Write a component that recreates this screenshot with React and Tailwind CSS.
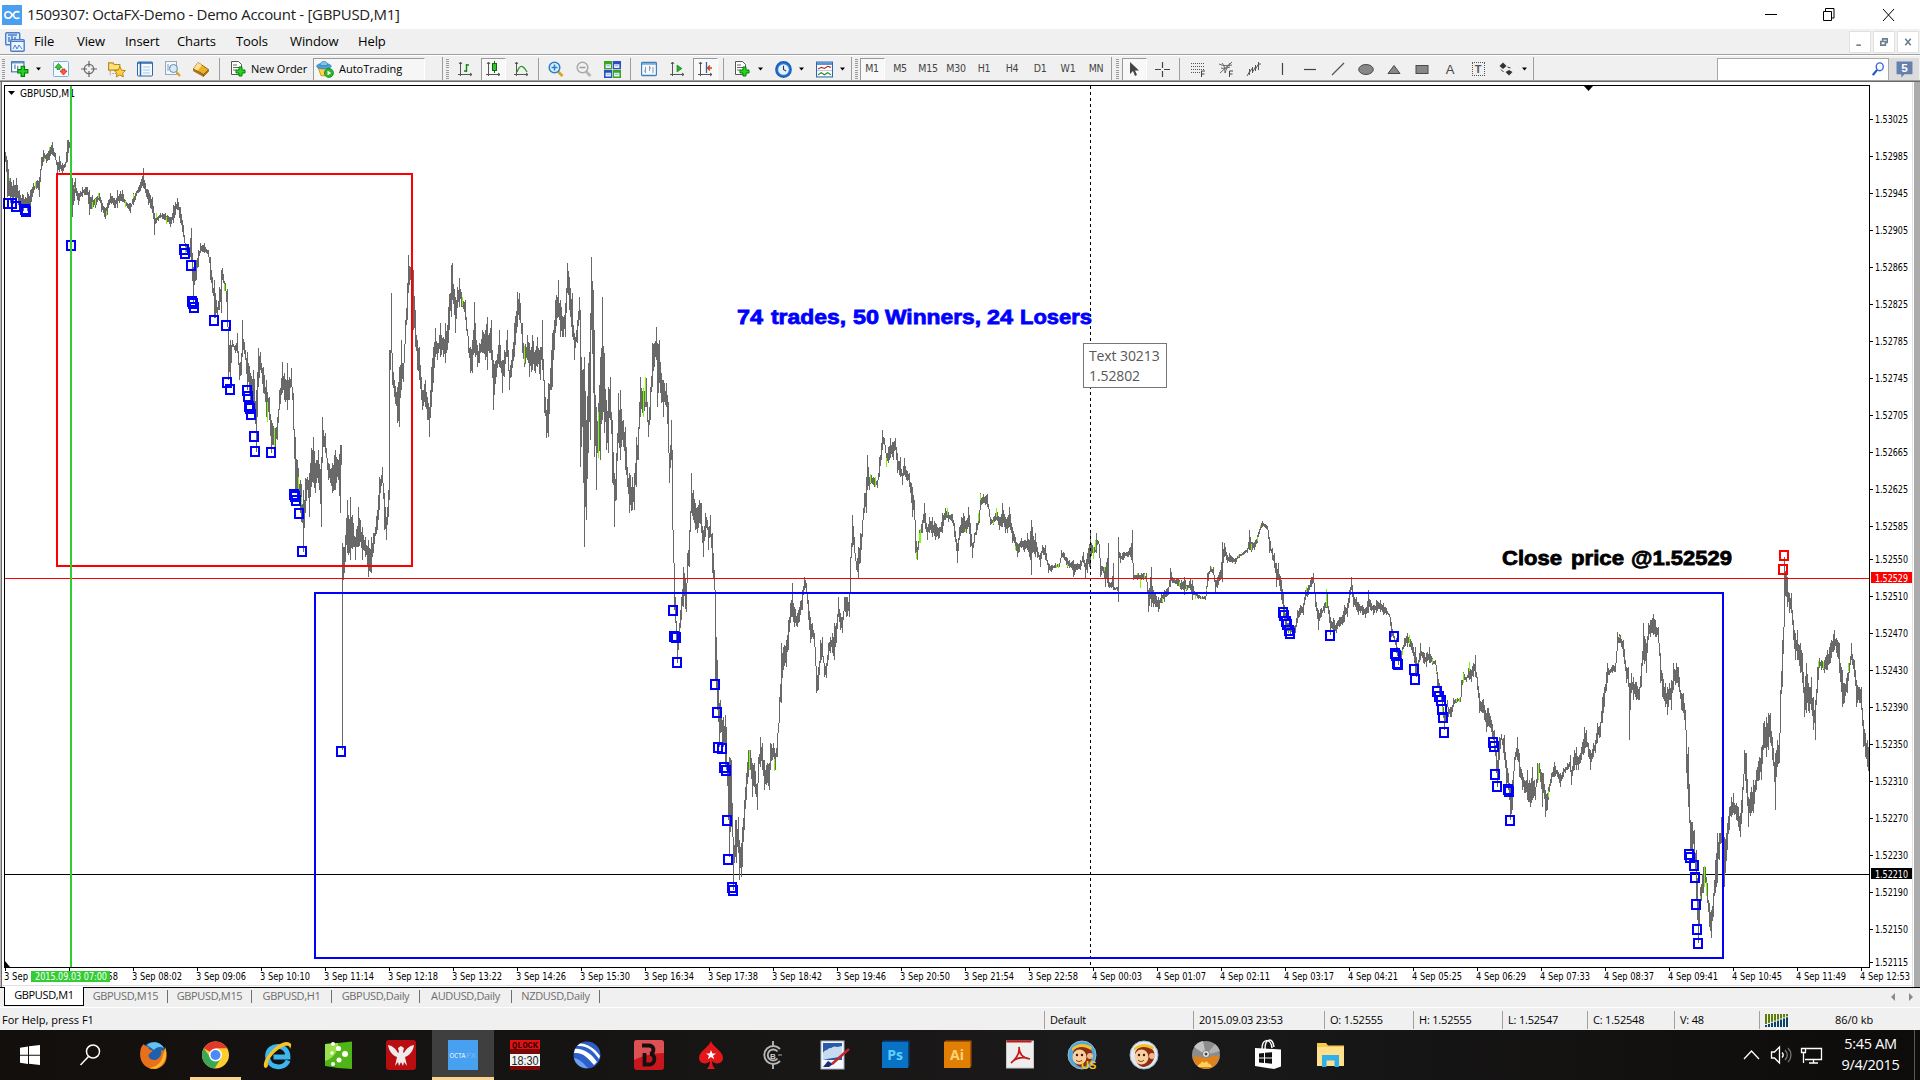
import clsx from 'clsx';

const UI = "font-['Open_Sans','Noto_Sans',sans-serif]";
const SMALL = "font-['DejaVu_Sans_Condensed','DejaVu_Sans',sans-serif]";

/* ---------- chart data ---------- */

// Every segment has its own origin; values are x, high, low in thirds of a pixel.
const SEGMENTS = [
  {
    ox: 0,
    oy: 80,
    range: [
      15,215,245, 21,240,350, 30,295,370, 40,300,372, 48,295,360, 57,330,385, 70,345,392, 80,335,392, 90,330,385, 100,310,340,
      110,300,325, 118,290,350, 123,230,270, 128,210,245, 138,222,248, 148,200,240, 157,187,225, 165,220,240, 170,245,280,
      178,228,275, 186,248,280, 194,245,262, 200,180,245, 205,180,220, 211,170,215, 217,320,410, 226,295,340, 233,340,375,
      245,320,350, 262,320,345, 266,330,405, 275,345,385, 285,355,385, 296,340,362, 303,360,395, 314,385,418, 322,370,405,
      330,340,370, 342,355,385, 352,330,385, 365,330,365, 376,360,380, 390,370,400, 400,340,375, 415,322,340, 428,265,325,
      435,310,340, 445,330,375, 455,350,400, 462,400,465, 467,405,430, 480,400,415, 495,400,420, 510,410,440, 520,375,430,
      530,355,390, 540,380,430, 550,435,470, 556,490,520, 568,500,520, 573,445,545, 578,560,670, 587,540,600, 593,510,560,
      600,490,520, 612,490,520, 625,510,530, 630,530,600, 636,590,640, 643,600,715, 650,680,720, 656,620,690, 662,570,700,
      667,565,600, 674,610,632, 680,628,740, 684,740,900, 691,780,925, 697,780,800, 705,795,820, 712,760,820, 716,850,900,
      722,820,885, 727,720,830, 735,810,840, 742,815,930, 750,880,960, 760,870,980, 767,930,1115, 773,805,920, 780,815,870,
      790,860,940, 797,900,1010, 806,950,1020, 814,1020,1120, 824,1045,1100, 830,1010,1080, 838,930,990, 845,845,940,
      852,880,960, 860,850,990, 866,890,960, 873,865,920, 878,940,1050, 884,1070,1240, 892,1140,1230, 900,1200,1300,
      908,1230,1415, 914,1195,1300, 920,1190,1230, 926,1180,1310, 932,1105,1220, 938,1070,1210, 946,1150,1240, 954,1110,1210,
      962,1130,1340, 966,1010,1150, 975,1060,1120, 985,1150,1200, 995,1150,1240, 1005,1110,1230, 1015,1140,1200,
      1021,1095,1300, 1025,1390,2010, 1030,1400,1500, 1040,1260,1420, 1050,1250,1440, 1058,1330,1400, 1066,1370,1440,
      1075,1280,1400, 1085,1340,1440, 1095,1370,1430, 1105,1380,1490, 1113,1370,1480, 1120,1360,1420, 1130,1290,1350,
      1138,1190,1290, 1146,1160,1210, 1152,1240,1350, 1158,1310,1380, 1165,1230,1310, 1168,810,1260, 1172,640,820,
      1176,825,915, 1182,900,950, 1190,920,1030, 1196,860,1040, 1202,780,930, 1208,850,905, 1214,720,790, 1220,610,720,
      1224,525,640, 1230,560,600, 1236,575,650,
    ],
    up: [
      28,295,303, 106,305,325, 133,233,243, 149,200,210, 224,320,327, 277,365,388, 286,358,375, 295,340,355, 319,393,408,
      375,362,380, 400,342,355, 470,400,415, 499,410,433, 556,500,520, 674,613,632, 802,965,1027, 824,1043,1100,
      895,1190,1240, 905,1250,1275, 1387,650,677,
    ],
  },
  {
    ox: 400,
    oy: 220,
    range: [
      40,150,330, 46,270,380, 52,360,450, 58,380,480, 66,510,570, 74,480,560, 82,530,600, 86,560,650, 92,440,560, 98,380,490,
      104,325,410, 112,370,420, 121,310,410, 128,350,410, 136,310,430, 144,260,370, 152,135,290, 157,130,240, 165,230,340,
      172,200,265, 178,175,260, 186,230,260, 196,240,300, 204,350,400, 210,380,460, 216,360,460, 222,245,400, 230,375,440,
      238,370,430, 246,330,400, 254,330,420, 260,290,450, 268,340,400, 274,300,420, 280,420,570, 288,420,470, 296,330,440,
      305,420,520, 312,390,470, 320,330,410, 327,450,510, 334,420,470, 342,310,410, 350,215,320, 358,220,300, 366,310,400,
      372,380,440, 380,345,420, 388,370,470, 396,345,450, 404,390,460, 412,350,440, 420,380,480, 426,300,450, 432,480,580,
      438,570,655, 444,490,650, 452,390,510, 457,340,500, 465,240,340, 473,180,290, 480,240,350, 488,290,350, 494,250,350,
      500,130,220, 508,170,270, 516,220,350, 523,340,420, 530,300,370, 537,230,300, 541,270,740, 547,450,620, 553,410,980,
      558,600,900, 563,430,700, 569,280,660, 573,110,330, 578,210,520, 583,330,710, 588,560,810, 594,550,710, 600,410,720,
      607,230,600, 612,400,640, 618,540,690, 624,500,700, 630,470,600, 636,600,790, 643,760,920, 648,700,840, 655,520,670,
      661,510,720, 668,600,680, 674,620,750, 680,740,800, 687,760,880, 695,770,870, 703,760,870, 709,650,800, 715,620,720,
      721,470,590, 728,530,590, 737,475,560, 744,600,650, 750,500,600, 756,370,500, 762,370,440, 767,320,420, 772,370,560,
      777,360,490, 784,460,550, 790,480,590, 797,490,560, 803,545,700, 807,700,790, 812,600,720, 815,690,930, 819,930,1030,
      822,1040,1170, 826,1120,1240,
    ],
    up: [373,378,430, 596,577,713, 731,503,590, 737,472,545],
  },
  {
    ox: 640,
    oy: 420,
    range: [
      106,530,610, 112,650,730, 118,610,660, 124,530,600, 130,440,560, 137,490,575, 142,400,480, 148,330,440, 152,160,280,
      158,210,300, 164,250,330, 170,260,340, 176,240,310, 182,250,340, 188,330,410, 194,280,350, 200,300,330, 205,320,390,
      211,285,350, 217,340,460, 221,450,510, 226,520,780, 232,720,870, 236,850,980, 241,840,940, 246,900,970, 250,890,980,
      254,885,1040, 259,920,1050, 263,1050,1200, 267,1010,1310, 272,1020,1220, 276,1150,1250, 279,1260,1410, 284,1200,1310,
      289,1200,1330, 293,1190,1300, 297,1260,1380, 302,1270,1370, 306,1220,1340, 312,1140,1230, 318,1060,1140, 325,990,1070,
      331,990,1050, 337,1030,1130, 343,1030,1100, 350,1090,1170, 354,1010,1070, 359,950,1040, 366,970,1050, 373,1020,1110,
      380,1030,1090, 386,1030,1110, 391,970,1050, 398,970,1010, 405,1000,1050, 411,940,1010, 417,830,910, 424,670,850,
      430,680,750, 437,660,740, 445,600,690, 451,550,610, 455,490,590, 462,560,620, 470,580,620, 478,560,605, 486,510,570,
      492,472,510, 497,490,520, 504,540,600, 511,590,670, 517,610,650, 523,640,680, 528,740,820, 534,740,810, 540,660,730,
      546,650,710, 551,740,770, 557,730,775, 563,670,720, 570,650,700, 577,640,700, 582,610,720, 588,610,670, 594,530,590,
      600,580,630, 606,590,640, 612,530,570, 619,530,590, 626,520,590, 631,410,500, 636,285,380, 642,350,400, 648,430,450,
      653,380,475, 659,340,430, 665,300,350, 671,220,280, 677,170,280, 681,105,210, 687,170,210, 694,165,190, 702,175,200,
      711,180,205, 717,110,170, 723,70,120, 727,30,90, 731,55,75, 737,100,135, 744,80,130, 751,55,115, 758,65,120, 766,55,90,
      772,100,160, 779,110,170, 785,160,195, 792,115,165, 799,150,180, 808,160,200, 815,200,290, 821,240,300, 826,340,400,
      832,380,420, 838,330,370, 846,300,340, 853,250,310, 860,320,360, 868,290,340, 876,290,350, 886,310,360, 896,320,355,
      906,280,340, 916,265,300, 925,275,305, 935,282,310, 943,310,350, 950,370,430, 956,320,360, 962,290,340, 969,280,340,
      977,300,340, 984,260,320, 990,310,380, 995,370,415, 1001,340,370, 1008,310,345, 1016,270,310, 1020,220,260,
      1030,222,250, 1042,222,260, 1050,290,315, 1060,290,315, 1068,270,300, 1078,290,330, 1086,250,320, 1094,290,340,
      1101,290,340, 1108,260,320, 1116,320,370, 1124,350,390, 1132,370,410, 1142,355,385, 1152,360,395, 1160,340,390,
      1168,360,410, 1173,300,465, 1177,320,400, 1184,340,410, 1192,380,415, 1199,400,440, 1206,375,400, 1216,375,420,
      1224,430,460, 1234,435,455, 1245,430,445, 1257,430,440, 1264,390,415, 1272,400,420, 1282,415,445, 1292,425,445,
      1300,420,470, 1312,430,450, 1320,420,450, 1328,395,430, 1336,430,475, 1342,400,460, 1349,340,440, 1356,375,400,
      1362,380,400, 1368,340,400, 1375,362,372, 1379,420,470, 1388,440,460, 1396,440,500, 1403,370,500, 1406,485,505,
      1412,485,505, 1420,430,510, 1423,500,510, 1430,500,512, 1433,350,545, 1436,395,415, 1440,400,430, 1450,395,420,
      1460,395,410, 1470,380,410, 1477,330,430, 1480,465,480, 1492,460,480,
    ],
    up: [
      328,990,1050, 404,1017,1052, 691,162,190, 706,170,202, 739,115,140, 829,395,418, 841,328,370, 838,340,370, 922,265,285,
      977,328,335, 1015,280,302, 1021,222,240, 1060,303,313, 1069,265,290, 1127,378,390, 1248,436,444, 1255,432,444,
      1283,432,442, 1360,380,418, 1366,360,390, 1394,440,452, 1492,460,466,
    ],
  },
  {
    ox: 1100,
    oy: 500,
    range: [
      112,220,240, 122,220,240, 130,220,240, 138,220,245, 145,270,335, 152,200,320, 158,270,320, 165,280,320, 175,290,335,
      183,280,310, 192,270,305, 203,260,285, 211,205,260, 220,235,250, 232,235,258, 243,240,270, 252,230,285, 262,255,270,
      269,235,270, 276,240,300, 284,275,290, 295,285,297, 305,288,297, 316,287,300, 322,220,260, 330,198,215, 340,200,225,
      346,240,280, 352,230,265, 360,210,240, 367,125,245, 373,130,170, 380,165,190, 388,160,185, 397,170,190, 405,175,192,
      415,165,175, 428,155,165, 440,145,160, 446,90,150, 453,125,155, 462,125,150, 472,105,130, 480,75,90, 486,62,80,
      500,78,90, 508,110,160, 516,145,180, 523,160,205, 529,190,260, 535,190,240, 543,240,300, 549,280,350, 556,340,380,
      565,370,400, 575,380,405, 585,375,400, 591,330,370, 600,315,345, 608,310,345, 616,270,300, 625,255,285, 632,230,260,
      640,220,250, 646,290,320, 655,330,390, 663,325,350, 672,310,340, 680,275,325, 686,330,370, 691,350,405, 698,355,395,
      707,370,400, 716,350,380, 725,345,375, 733,315,365, 741,310,350, 747,270,310, 754,230,270, 760,280,320, 767,290,330,
      775,305,345, 785,315,345, 795,325,355, 803,270,340, 811,300,330, 819,315,345, 829,300,340, 839,300,335, 848,310,345,
      858,325,345, 866,342,350, 872,365,410, 880,400,415, 887,415,460, 893,450,495, 900,455,490, 906,440,465, 912,415,440,
      920,400,440, 928,410,440, 936,430,460, 944,440,520, 949,470,530, 955,480,510, 961,430,480, 970,455,490, 978,460,500,
      987,440,490, 996,475,495, 1005,480,495, 1011,515,560, 1017,550,590, 1024,580,600, 1032,640,690, 1040,600,620,
      1045,620,650, 1052,620,650, 1060,595,620, 1070,595,607, 1079,590,605, 1083,540,580, 1089,515,545, 1098,530,545,
      1106,490,540, 1113,510,545, 1124,465,530, 1131,530,570, 1138,580,640, 1146,600,640, 1153,615,660, 1160,625,680,
      1168,640,680, 1176,675,710, 1182,690,750, 1187,750,820, 1192,780,860, 1197,710,780, 1204,703,720, 1212,705,780,
      1217,780,860, 1224,820,870, 1231,860,960, 1237,840,930, 1243,770,800, 1250,710,780, 1257,760,830, 1265,820,870,
      1273,840,880, 1281,810,900, 1290,850,920, 1297,800,900, 1305,860,900, 1310,790,850, 1316,790,840,
    ],
    up: [
      14,203,212, 122,235,265, 133,222,235, 188,293,307, 238,245,260, 260,258,270, 286,285,297, 305,290,297, 320,267,272,
      334,200,207, 404,188,193, 415,166,170, 425,156,160, 454,133,150, 473,110,122, 480,75,80, 620,262,275, 680,268,320,
      906,450,465, 928,405,432, 998,478,490, 1010,514,520, 1028,620,636, 1068,597,605, 1078,594,605, 1090,520,548,
      1108,485,512, 1316,793,838,
    ],
  },
  {
    ox: 1480,
    oy: 540,
    range: [
      -4,480,515, 4,490,515, 10,478,505, 17,520,575, 24,505,545, 32,540,575, 40,560,600,
    ],
    up: [],
  },
  {
    ox: 1480,
    oy: 540,
    range: [
      178,670,700, 185,700,800, 190,700,760, 194,750,830, 200,760,810, 205,740,780, 212,700,730, 218,680,710, 223,665,710,
      232,690,710, 240,700,740, 250,685,710, 262,670,690, 269,645,695, 274,690,735, 281,630,690, 287,620,690, 295,650,690,
      303,620,660, 311,560,640, 318,570,620, 325,610,650, 331,630,690, 338,610,650, 345,600,640, 352,550,610, 360,545,590,
      366,470,550, 373,440,500, 381,370,430, 388,390,405, 397,375,400, 406,370,395, 412,275,320, 420,285,310, 428,300,350,
      437,380,430, 443,380,440, 447,430,600, 453,400,460, 460,410,480, 468,425,480, 476,440,480, 483,370,440, 490,250,360,
      497,310,400, 503,250,300, 510,240,290, 518,222,285, 525,240,290, 533,260,310, 540,340,430, 547,400,470, 554,430,500,
      560,440,525, 568,430,480, 574,420,510, 580,370,450, 587,370,430, 595,380,440, 602,460,510, 608,460,520, 614,510,570,
      619,590,700, 624,620,800, 629,840,930, 635,845,930, 641,870,940, 648,930,1080, 655,1080,1210, 661,1040,1100,
      668,980,1060, 674,980,1030, 681,1030,1090, 686,1090,1160, 693,1110,1195, 699,1060,1130, 705,960,1060, 710,880,1030,
      716,880,960, 722,830,910, 728,830,890, 733,910,1040, 740,850,930, 746,800,870, 752,770,830, 760,760,820, 768,790,840,
      774,800,860, 779,820,890, 785,740,820, 792,630,700, 797,640,760, 805,770,860, 812,740,820, 820,720,820, 828,690,750,
      836,650,720, 843,620,720, 850,550,630, 857,530,650, 864,520,630, 871,520,610, 877,590,660, 884,640,810, 890,600,680,
      897,580,670, 901,450,560, 906,300,440, 911,150,360, 913,50,170, 917,100,170, 920,110,200, 927,160,220, 933,160,220,
      939,240,300, 945,280,360, 952,270,360, 960,310,400, 967,340,430, 972,440,530, 979,370,520, 986,440,520, 993,410,510,
      1000,470,570, 1005,480,600, 1010,380,460, 1017,355,385, 1024,360,390, 1032,360,400, 1040,330,390, 1050,310,370,
      1061,270,330, 1070,300,350, 1078,310,400, 1087,390,500, 1093,430,490, 1100,400,460, 1107,370,400, 1114,310,360,
      1121,360,410, 1128,420,500, 1135,440,480, 1143,440,510, 1149,540,620, 1156,580,650, 1161,600,680, 1166,600,740,
    ],
    up: [
      176,680,720, 205,752,772, 418,287,293, 661,1068,1078, 673,978,1040, 680,1027,1067, 1015,363,380, 1031,367,388,
      1105,370,392,
    ],
  },
];

const MARKERS = [
  [8,203], [12,203], [16,206], [25,209], [26,211], [71,245], [184,249], [185,253], [191,265], [192,301], [193,303], [194,307],
  [214,320], [226,325], [227,382], [230,389], [247,390], [248,396], [249,406], [250,408], [251,414], [254,436], [255,451],
  [271,452], [294,494], [295,496], [296,500], [299,513], [302,551], [341,751], [673,610], [674,636], [676,637], [677,662],
  [715,684], [717,712], [718,747], [722,748], [724,767], [726,770], [727,820], [728,859], [732,887], [733,890], [1283,612],
  [1284,615], [1286,621], [1287,624], [1289,630], [1290,633], [1330,635], [1394,636], [1395,653], [1396,655], [1397,663],
  [1398,664], [1414,669], [1415,679], [1437,691], [1439,696], [1441,700], [1442,709], [1443,717], [1444,732], [1493,742],
  [1494,746], [1495,774], [1497,786], [1508,789], [1509,791], [1510,820], [1689,854], [1690,857], [1694,865], [1695,877],
  [1696,904], [1697,929], [1698,943],
];

const PRICES = [
  ['1.53025', 119], ['1.52985', 156], ['1.52945', 193], ['1.52905', 230], ['1.52865', 267], ['1.52825', 304],
  ['1.52785', 341], ['1.52745', 378], ['1.52705', 415], ['1.52665', 452], ['1.52625', 489], ['1.52585', 526],
  ['1.52550', 559], ['1.52510', 596], ['1.52470', 633], ['1.52430', 670], ['1.52390', 707], ['1.52350', 744],
  ['1.52310', 781], ['1.52270', 818], ['1.52230', 855], ['1.52190', 892], ['1.52150', 929], ['1.52115', 962],
];

// first label sits on the third tick, the two before it are mostly hidden by the green tag
const TIMES = [
  '3 Sep 08:02', '3 Sep 09:06', '3 Sep 10:10', '3 Sep 11:14', '3 Sep 12:18', '3 Sep 13:22', '3 Sep 14:26', '3 Sep 15:30',
  '3 Sep 16:34', '3 Sep 17:38', '3 Sep 18:42', '3 Sep 19:46', '3 Sep 20:50', '3 Sep 21:54', '3 Sep 22:58', '4 Sep 00:03',
  '4 Sep 01:07', '4 Sep 02:11', '4 Sep 03:17', '4 Sep 04:21', '4 Sep 05:25', '4 Sep 06:29', '4 Sep 07:33', '4 Sep 08:37',
  '4 Sep 09:41', '4 Sep 10:45', '4 Sep 11:49', '4 Sep 12:53',
];

// word, x, width
const SUMMARY = [
  ['74', 737, 26], ['trades,', 771, 75], ['50', 853, 26], ['Winners,', 885, 96], ['24', 987, 26], ['Losers', 1020, 72],
];
const CLOSE_PRICE = [['Close', 1502, 60], ['price', 1571, 53], ['@1.52529', 1631, 101]];

function buildBars() {
  let seed = 7;
  const rand = () => {
    seed = (seed * 16807) % 2147483647;
    return seed / 2147483647;
  };
  let d = '';
  SEGMENTS.forEach(({ ox, oy, range }) => {
    let prev = null;
    for (let i = 0; i + 5 < range.length; i += 3) {
      const [x0, h0, l0, x1, h1, l1] = range.slice(i, i + 6);
      const a = Math.round(ox + x0 / 3);
      const b = Math.round(ox + x1 / 3);
      const jump = Math.abs(h1 - h0) > 400 || Math.abs(l1 - l0) > 400;
      for (let x = a; x < b; x++) {
        const t = (x - a) / (b - a);
        let hi = h0 + (h1 - h0) * t;
        let lo = l0 + (l1 - l0) * t;
        // key bars keep their full range, the ones between are shortened
        if (x !== a) {
          const span = lo - hi;
          hi += rand() * span * 0.35;
          lo -= rand() * span * 0.35;
          if (jump) {
            hi = t > 0.5 ? h1 : h0;
            lo = hi + 60;
          }
        }
        // each bar opens where the last one closed
        if (prev && !jump) {
          hi = Math.min(hi, prev.lo);
          lo = Math.max(lo, prev.hi);
        }
        prev = { hi, lo };
        const y = Math.round(oy + hi / 3);
        d += `M${x + 0.5} ${y}V${Math.max(Math.round(oy + lo / 3), y + 2)}`;
      }
    }
  });
  return d;
}

function buildUpBars() {
  let d = '';
  SEGMENTS.forEach(({ ox, oy, up }) => {
    for (let i = 0; i < up.length; i += 3) {
      d += `M${Math.round(ox + up[i] / 3 - 0.5) + 0.5} ${Math.round(oy + up[i + 1] / 3)}V${Math.round(oy + up[i + 2] / 3)}`;
    }
  });
  return d;
}

const BARS = buildBars();
const UP_BARS = buildUpBars();

const Label = ({ x, y, w, fill, children }) => (
  <text x={x} y={y} textLength={w} lengthAdjust="spacingAndGlyphs" fill={fill}>{children}</text>
);

function Chart() {
  return (
    <svg viewBox="0 82 1914 905" width="1914" height="905" className={clsx('block bg-white text-[10px]', SMALL)}>
      <g shapeRendering="crispEdges">
        <rect x="0" y="82" width="1" height="905" fill="#b9b9b9" />
        <rect x="1" y="82" width="1" height="905" fill="#696969" />
        <rect x="1912" y="82" width="1" height="905" fill="#e0e0e0" />
        <rect x="2" y="985" width="1911" height="1" fill="#e0e0e0" />
        <path d="M5 874.500H1869" stroke="#000" />
        <path d={BARS} stroke="#696969" fill="none" />
        <path d={UP_BARS} stroke="#7cfc00" fill="none" />
        <path d="M1090.500 86V967" stroke="#000" strokeDasharray="3 3" />
        <path d="M5 578.500H1869" stroke="#f00" />
        <rect x="57" y="174" width="355" height="392" fill="none" stroke="#f00" strokeWidth="2" />
        <rect x="315" y="593" width="1408" height="365" fill="none" stroke="#00f" strokeWidth="2" />
        {MARKERS.map(([x, y]) => (
          <rect key={`${x}-${y}`} x={x - 4} y={y - 4} width="8" height="9" fill="none" stroke="#00f" strokeWidth="2" />
        ))}
        <rect x="1780" y="551" width="8" height="9" fill="none" stroke="#f00" strokeWidth="2" />
        <rect x="1779" y="565" width="8" height="9" fill="none" stroke="#f00" strokeWidth="2" />
      </g>

      <path d="M8 91h7l-3.500 4z" fill="#000" />
      <Label x={20} y={97} w={55}>GBPUSD,M1</Label>
      <rect x="70" y="86" width="2" height="881" fill="#32cd32" shapeRendering="crispEdges" />
      <path d="M1584 86h9l-4.500 5z" fill="#000" />
      <path d="M5 961l5 6h-5z" fill="#000" />

      <g className="font-['Liberation_Sans',Arial,sans-serif] text-[20.500px] font-bold" strokeWidth="0.8">
        <g fill="#00f" stroke="#00f">
          {SUMMARY.map(([word, x, w]) => (
            <Label key={word} x={x} y={324} w={w}>{word}</Label>
          ))}
        </g>
        <g fill="#000" stroke="#000">
          {CLOSE_PRICE.map(([word, x, w]) => (
            <Label key={word} x={x} y={565} w={w}>{word}</Label>
          ))}
        </g>
      </g>

      <g shapeRendering="crispEdges" fill="none" stroke="#000">
        <path d="M1869.500 967.500H4.500V85.500H1869.500z" />
        {PRICES.map(([p, y]) => (
          <path key={p} d={`M1870 ${y + 0.5}h3`} />
        ))}
        {Array.from({ length: 30 }, (_, i) => (
          <path key={i} d={`M${5.5 + i * 64} 968v3`} />
        ))}
      </g>
      {PRICES.map(([p, y]) => (
        <Label key={p} x={1875} y={y + 3.5} w={33}>{p}</Label>
      ))}
      <rect x="1871" y="572" width="41" height="11" fill="#f00" />
      <Label x={1875} y={581.5} w={33} fill="#fff">1.52529</Label>
      <rect x="1871" y="868" width="41" height="11" fill="#000" />
      <Label x={1875} y={877.5} w={33} fill="#fff">1.52210</Label>

      <Label x={4} y={980} w={24}>3 Sep</Label>
      <Label x={107.5} y={980} w={10.5}>58</Label>
      {TIMES.map((t, i) => (
        <Label key={t} x={132 + i * 64} y={980} w={50}>{t}</Label>
      ))}
      <rect x="31" y="971" width="79" height="11" fill="#32cd32" />
      <Label x={35} y={980} w={72} fill="#fff">2015.09.03 07:00</Label>
    </svg>
  );
}

/* ---------- toolbar ---------- */

function Icon({ children, size = 16 }) {
  return (
    <svg viewBox="0 0 16 16" width={size} height={size} fill="none" className="shrink-0">
      {children}
    </svg>
  );
}

const Cell = ({ children, on }) => (
  <div className="flex w-7 shrink-0 items-center justify-center">
    <div
      className={clsx(
        'flex h-[23px] w-[25px] items-center justify-center',
        on && 'border border-t-[#9a9a9a] border-r-white border-b-white border-l-[#9a9a9a] bg-[#f8f8f8]',
      )}
    >
      {children}
    </div>
  </div>
);

const Arrow = () => (
  <svg viewBox="0 0 9 4" width="9" height="4" className="mr-1 shrink-0">
    <path d="M2 0.500h5L4.500 3.500z" fill="#000" />
  </svg>
);
const Sep = ({ className }) => <div className={clsx('h-[22px] w-px shrink-0 bg-[#9d9d9d]', className)} />;
const Grip = ({ className }) => (
  <div className={clsx('flex h-[20px] w-[3px] shrink-0 flex-col justify-between', className)}>
    {Array.from({ length: 10 }, (_, i) => (
      <i key={i} className="h-px bg-[#9a9a9a]" />
    ))}
  </div>
);

const Plus = ({ x = 6, y = 6 }) => (
  <path
    d={`M${x + 3.5} ${y + 0.5}h3v3h3v3h-3v3h-3v-3h-3v-3h3z`}
    fill="#1fd81f"
    stroke="#067a06"
  />
);
const Axes = ({ children }) => (
  <Icon>
    <path d="M3.500 1v14M1 13.500h14M2 3l1.500-2L5 3M13 12l2 1.500L13 15" stroke="#555" />
    {children}
  </Icon>
);

const NewChart = () => (
  <Icon size={18}>
    <rect x="0.500" y="1.500" width="11" height="9" fill="#fff" stroke="#3a78b5" />
    <path d="M0.500 2.500h11" stroke="#3a78b5" />
    <path d="M3.500 4v4M6 5v3" stroke="#3a78b5" />
    <Plus x={5.500} y={5} />
  </Icon>
);
const MarketWatch = () => (
  <Icon>
    <rect x="0.500" y="0.500" width="15" height="15" rx="1" fill="#f4f9ff" stroke="#7fb0dd" />
    <path d="M5.500 2.500l3.500 4H7v2H4v-2H2z" fill="#3ec93e" stroke="#128012" strokeWidth="0.700" />
    <path d="M10.500 14L7 10h2V8h3v2h2z" fill="#ff5a3c" stroke="#b51f08" strokeWidth="0.700" />
  </Icon>
);
const Crosshair = () => (
  <Icon>
    <circle cx="8" cy="8" r="4.700" stroke="#666" strokeWidth="1.300" />
    <path d="M8 0v6M8 10v6M0 8h6M10 8h6" stroke="#666" strokeWidth="1.200" />
  </Icon>
);
const FolderStar = () => (
  <Icon size={18}>
    <path d="M0.500 2.500h4l1 1.500h5v5h-10z" fill="#ffe07a" stroke="#b98a1b" />
    <path d="M2 10v4M4 12h3" stroke="#888" strokeDasharray="1 1" />
    <path d="M10.500 6l1.500 3 3.500.400-2.500 2.300.700 3.300-3.200-1.700-3.100 1.700.600-3.300L5.500 9.400 9 9z" fill="#ffd23c" stroke="#b07a0b" strokeWidth="0.800" />
  </Icon>
);
const ListPane = () => (
  <Icon>
    <rect x="0.500" y="1" width="15" height="14" rx="1" fill="#f4f9ff" stroke="#2c68a8" />
    <path d="M3.500 1v14M0.500 2h15" stroke="#2c68a8" strokeWidth="1.500" />
    <path d="M6 6h7M6 9h7M6 12h7" stroke="#a9c5e0" />
  </Icon>
);
const Tester = () => (
  <Icon>
    <rect x="0.500" y="0.500" width="11" height="13" fill="#f3f8fd" stroke="#98a8b8" />
    <path d="M3 3v7M5 5v3" stroke="#7a9fc4" />
    <circle cx="8.500" cy="7.500" r="4" fill="#cfe6f8" fillOpacity="0.800" stroke="#6689aa" />
    <path d="M11.500 11l3.500 4" stroke="#d9a520" strokeWidth="2.200" />
  </Icon>
);
const Book = () => (
  <Icon>
    <path d="M5 1.500l10.500 7-5 5L0.500 8z" fill="#e9b22c" stroke="#9a6608" />
    <path d="M5 1.500l4 2.700L4.500 9.700.5 8z" fill="#ffe191" />
    <path d="M0.500 8v2l10 5.500v-2zM10.500 15.500l5-5v-2l-5 5z" fill="#b67a10" stroke="#8a5a05" strokeWidth="0.600" />
  </Icon>
);
const OrderDoc = () => (
  <Icon>
    <path d="M1.500 0.500h7l3 3v10h-10z" fill="#fff" stroke="#555" />
    <path d="M3 4h4M3 6.500h6M3 9h3" stroke="#666" />
    <Plus x={5.500} y={5.500} />
  </Icon>
);
const AutoIcon = () => (
  <Icon size={18}>
    <path d="M2 7h10l-2.500 7h-5z" fill="#ffd24a" stroke="#b88712" strokeWidth="0.700" />
    <ellipse cx="7" cy="5.500" rx="6.500" ry="2.500" fill="#4aa2d9" stroke="#2876a8" strokeWidth="0.600" />
    <path d="M3.500 5C3.500 0 10.500 0 10.500 5z" fill="#7cc4ec" stroke="#2876a8" strokeWidth="0.600" />
    <circle cx="11.500" cy="11.500" r="4" fill="#2fb82f" stroke="#0f7d0f" strokeWidth="0.700" />
    <path d="M10.300 9.500l3.200 2-3.200 2z" fill="#fff" />
  </Icon>
);
const Zoom = ({ plus }) => (
  <Icon>
    <path d="M9.500 10l5 5" stroke={plus ? '#d9a520' : '#b5b5b5'} strokeWidth="2.800" />
    <circle cx="6.500" cy="6.500" r="5.300" fill={plus ? '#d9efff' : '#f2f2f2'} stroke={plus ? '#2f7fc4' : '#a9a9a9'} strokeWidth="1.500" />
    <path d={plus ? 'M3.500 6.500h6M6.500 3.500v6' : 'M3.500 6.500h6'} stroke={plus ? '#2f7fc4' : '#a0a0a0'} strokeWidth="1.600" />
  </Icon>
);
const Tiles = () => (
  <Icon size={17}>
    <rect x="0" y="0" width="7.700" height="7.700" fill="#3ba51c" />
    <rect x="8.300" y="0" width="7.700" height="7.700" fill="#2a50c0" />
    <rect x="0" y="8.300" width="7.700" height="7.700" fill="#2a50c0" />
    <rect x="8.300" y="8.300" width="7.700" height="7.700" fill="#3ba51c" />
    <path d="M1.500 3h5v3.500h-5zM9.500 3h5v3.500h-5zM1.500 11h5v3.500h-5zM9.500 11h5v3.500h-5z" fill="#e6f1ff" />
    <path d="M2.500 4.500h3M10.500 4.500h3M2.500 12.500h3M10.500 12.500h3" stroke="#8fb0d8" />
  </Icon>
);
const ChartWindow = () => (
  <Icon>
    <rect x="0.500" y="1.500" width="15" height="13" rx="1" fill="#f4f9ff" stroke="#3f7fbd" strokeWidth="1.300" />
    <path d="M1 3h14" stroke="#3f7fbd" />
    <path d="M4.500 6v6M3 10h1.500M8.500 5v5M8.500 7H10M12 6v6" stroke="#8a9aa8" />
  </Icon>
);
const Clock = () => (
  <Icon size={17}>
    <circle cx="8" cy="8" r="7" fill="#2e7fd6" stroke="#1f62b8" strokeWidth="1.800" />
    <circle cx="8" cy="8" r="5" fill="#e4f1ff" />
    <path d="M8 4.500V8l2.500 1.500" stroke="#333" />
  </Icon>
);
const Template = () => (
  <Icon size={17}>
    <rect x="0.500" y="1" width="15" height="14" fill="#fff" stroke="#2c68a8" />
    <path d="M1 2.500h14" stroke="#5b93cc" strokeWidth="2.500" />
    <path d="M2 7.500l3-1.500 3 1 3-2 3 1" stroke="#b82020" />
    <path d="M1 9h14" stroke="#bcd" />
    <path d="M2 13l3-2 3 2 3-2 3 2" stroke="#20902b" />
  </Icon>
);

const DrawTools = [
  <Icon key="fibo">
    <path d="M1 2.500h13M1 5.500h13M1 8.500h13M1 11.500h9" stroke="#555" strokeDasharray="1 1" />
    <path d="M11.500 16v-6H15M11.500 13h3" stroke="#444" />
  </Icon>,
  <Icon key="fan">
    <path d="M2 12L14 1M1 3c4 2 8 2 13 1M3 7c3 1 6 0 9-1M7 12c0-5-1-8-3-10M7 12c1-3 2-6 5-10" stroke="#666" />
    <path d="M11.500 16v-6H15M11.500 13h3" stroke="#444" />
  </Icon>,
  <Icon key="channel">
    <path d="M1 15l3-5M3.500 8v6M6.500 6v6M9.500 4v6M12.500 1v8M3.500 11l3-4M6.500 11l3-5M9.500 8l3-5M12.500 3H15" stroke="#555" />
  </Icon>,
  <Icon key="v"><path d="M8.500 2v12" stroke="#444" strokeWidth="1.200" /></Icon>,
  <Icon key="h"><path d="M2 8.500h12" stroke="#444" strokeWidth="1.200" /></Icon>,
  <Icon key="trend"><path d="M2 14L14 2" stroke="#555" strokeWidth="1.200" /></Icon>,
  <Icon key="ellipse"><ellipse cx="8" cy="8.500" rx="7.300" ry="5" fill="#878787" stroke="#4a4a4a" /></Icon>,
  <Icon key="tri"><path d="M8 4.500l6 8h-12z" fill="#878787" stroke="#4a4a4a" /></Icon>,
  <Icon key="rect"><rect x="2" y="4.500" width="12" height="8" fill="#878787" stroke="#4a4a4a" /></Icon>,
  <span key="a" className="font-['Liberation_Sans',sans-serif] text-[13px] leading-none text-[#444]">A</span>,
  <span key="t" className="flex h-[14px] w-[13px] items-center justify-center border border-dotted border-[#555] font-['Liberation_Sans',sans-serif] text-[11px] leading-none font-bold text-[#555]">T</span>,
  <Icon key="arrows">
    <path d="M5 1.500l3.500 3.500L5 8 1.500 5z" fill="#333" />
    <path d="M11 14.500L7.500 11 11 9l3.500 2z" fill="#333" />
    <path d="M3 8.500l2.500 2.500M9.500 6l3 1" stroke="#333" />
  </Icon>,
];

function Toolbar() {
  return (
    <div className="flex h-[25px] shrink-0 items-center border-t border-white bg-[#f0f0f0] pt-[2px]">
      <Grip className="mr-px ml-[2px]" />
      <div className="flex w-[28px] justify-center"><NewChart /></div>
      <Arrow />
      <Cell><MarketWatch /></Cell>
      <Cell><Crosshair /></Cell>
      <Cell><FolderStar /></Cell>
      <Cell><ListPane /></Cell>
      <Cell><Tester /></Cell>
      <Cell><Book /></Cell>
      <Sep className="mr-[10px] ml-[4px]" />
      <OrderDoc />
      <span className={clsx('ml-[5px] w-[62px] text-[11px] whitespace-nowrap', UI)}>New Order</span>
      <div className="flex h-[23px] w-[112px] items-center gap-[5px] border border-t-[#9a9a9a] border-r-white border-b-white border-l-[#9a9a9a] bg-[#f6f6f6] pl-[2px]">
        <AutoIcon />
        <span className={clsx('text-[11px] whitespace-nowrap', UI)}>AutoTrading</span>
      </div>
      <Sep className="mr-[3px] ml-[17px] h-[25px]" />
      <Grip className="mr-[2px]" />
      <Cell><Axes><path d="M9.500 3v8M9.500 4H12M7 10h2.500" stroke="#0b8a0b" strokeWidth="1.400" /></Axes></Cell>
      <Cell on><Axes><path d="M9.500 0v12" stroke="#0b6a0b" /><rect x="7.500" y="2.500" width="4" height="7" fill="#2fc42f" stroke="#0b6a0b" /></Axes></Cell>
      <Cell><Axes><path d="M4 11c3-8 6-7 10 0" stroke="#1f9a1f" strokeWidth="1.300" /></Axes></Cell>
      <Sep className="mx-[3px]" />
      <Cell><Zoom plus /></Cell>
      <Cell><Zoom /></Cell>
      <Cell><Tiles /></Cell>
      <Sep className="mx-[4px]" />
      <Cell><ChartWindow /></Cell>
      <Cell><Axes><path d="M8 4l5 3.500L8 11z" fill="#22b522" stroke="#0b7a0b" strokeWidth="0.600" /></Axes></Cell>
      <Cell on><Axes><path d="M9.500 1v11" stroke="#2c68a8" strokeWidth="1.300" /><path d="M15 7h-4M13 4.500L10.500 7 13 9.500" stroke="#c8401a" strokeWidth="1.300" /></Axes></Cell>
      <Sep className="mx-[4px]" />
      <Cell><OrderDoc /></Cell>
      <Arrow />
      <Cell><Clock /></Cell>
      <Arrow />
      <Cell><Template /></Cell>
      <Arrow />
      <Sep className="mr-[3px] h-[25px]" />
      <Grip />
      {['M1', 'M5', 'M15', 'M30', 'H1', 'H4', 'D1', 'W1', 'MN'].map((t) => (
        <Cell key={t} on={t === 'M1'}>
          <span className={clsx('text-[10.500px] tracking-[-0.3px] text-[#444]', SMALL)}>{t}</span>
        </Cell>
      ))}
      <Sep className="mr-[4px] ml-px h-[25px]" />
      <Grip className="mr-px" />
      <Cell on><Icon><path d="M4 1v12l3-3 2 5 2-1-2-4.500h4z" fill="#444" /></Icon></Cell>
      <Cell><Icon><path d="M8.500 1v6M8.500 10v6M1 8.500h6M10 8.500h6" stroke="#444" strokeWidth="1.200" /></Icon></Cell>
      <Sep className="mr-[4px] ml-[3px]" />
      {DrawTools.map((tool) => (
        <Cell key={tool.key}>{tool}</Cell>
      ))}
      <Arrow />
      <Sep className="h-[25px]" />
      <div className="ml-auto flex h-[23px] w-[172px] items-center justify-end border border-[#a8a8a8] bg-white pr-[3px]">
        <Icon size={14}>
          <path d="M7 9l-5 6" stroke="#2456c8" strokeWidth="2.600" />
          <ellipse cx="10" cy="5.500" rx="4" ry="4.500" stroke="#3568d8" strokeWidth="1.600" />
        </Icon>
      </div>
      <div className="mr-px flex h-[23px] w-[30px] items-center justify-center bg-[#dcdcdc]">
        <svg viewBox="0 0 16 16" width="17" height="17">
          <path d="M0.500 0.500h15v12H8l-3 3v-3H0.500z" fill="#6480ad" />
          <text x="8" y="10.500" textAnchor="middle" fill="#fff" className="font-['Liberation_Sans',sans-serif] text-[11px] font-bold">5</text>
        </svg>
      </div>
    </div>
  );
}

/* ---------- window frame ---------- */

function TitleBar() {
  return (
    <div className="flex h-[29px] shrink-0 items-center bg-white pl-[2px]">
      <svg viewBox="0 0 20 20" width="20" height="20">
        <rect width="20" height="20" fill="#4aa0ee" />
        <path d="M10.500 10c-1.500 2.300-2.500 3.300-4.300 3.300a3.300 3.300 0 0 1 0-6.600c1.800 0 2.800 1 4.300 3.300zM17.500 7.200c-3.500-1.500-6 0-6 2.800s2.500 4.300 6 2.800" fill="none" stroke="#fff" strokeWidth="1.600" />
      </svg>
      <span className={clsx('ml-[5px] text-[15px] tracking-[-0.300px] whitespace-nowrap text-[#222]', UI)}>
        1509307: OctaFX-Demo - Demo Account - [GBPUSD,M1]
      </span>
      <svg viewBox="0 0 130 14" width="130" height="14" fill="none" stroke="#000" className="mr-[25px] ml-auto">
        <path d="M0 6.500h12" />
        <path d="M58.500 3.500h8v9h-8zM60.500 3V0.500h8.500v9.500h-2" />
        <path d="M118 1l11 12M129 1l-11 12" />
      </svg>
    </div>
  );
}

function MenuBar() {
  return (
    <div className="flex h-[26px] shrink-0 items-center border-b border-[#a0a0a0] bg-[#f0f0f0] pl-[5px]">
      <svg viewBox="0 0 20 20" width="20" height="20" fill="none" stroke="#4a7fc8">
        <rect x="0.700" y="0.700" width="14" height="12" rx="1" fill="#dcebff" strokeWidth="1.400" />
        <path d="M3 3h9M4 5v5M7 4v5M10 5v4" strokeWidth="1.500" />
        <rect x="5.700" y="7.700" width="13.500" height="11.500" rx="1" fill="#f0f6ff" strokeWidth="1.400" />
        <path d="M6 9.500h13M8 17l2-4 2 4 2-4 3 4" />
      </svg>
      <div className={clsx('ml-[9px] flex text-[13px] text-black', UI)}>
        {[
          ['File', 'w-[43px]'],
          ['View', 'w-[48px]'],
          ['Insert', 'w-[52px]'],
          ['Charts', 'w-[59px]'],
          ['Tools', 'w-[54px]'],
          ['Window', 'w-[68px]'],
          ['Help', 'w-[40px]'],
        ].map(([m, w]) => (
          <span key={m} className={clsx('tracking-[-0.1px]', w)}>{m}</span>
        ))}
      </div>
      <div className="mr-px ml-auto flex gap-[2px]">
        {['M7 14.500h5', 'M7.500 10.500h5v4h-5zM9.500 10V7.500h5v4h-2', 'M8 7.500l6 7M14 7.500l-6 7'].map((d) => (
          <div key={d} className="h-[22px] w-[22px] border border-[#e0e0e0] bg-white">
            <svg viewBox="0 0 22 22" width="20" height="20" fill="none" stroke="#6d8090" strokeWidth="1.800">
              <path d={d} />
            </svg>
          </div>
        ))}
      </div>
    </div>
  );
}

function ChartTabs() {
  const tabs = [
    ['GBPUSD,M15', 'w-[84px]'],
    ['GBPUSD,M15', 'w-[84px]'],
    ['GBPUSD,H1', 'w-[80px]'],
    ['GBPUSD,Daily', 'w-[88px]'],
    ['AUDUSD,Daily', 'w-[92px]'],
    ['NZDUSD,Daily', 'w-[88px]'],
  ];
  return (
    <div className={clsx('flex h-[21px] shrink-0 items-start border-b border-white bg-[#f0f0f0] text-[11px] tracking-[-0.35px] text-[#6d6d6d]', UI)}>
      <div className="h-[19px] w-[4px] border-t border-black" />
      <div className="flex h-[19px] w-[80px] items-center justify-center border-x border-b border-black bg-white pb-px text-black">GBPUSD,M1</div>
      <div className="flex h-[19px] flex-1 items-center border-t border-black pb-px">
        {tabs.map(([name, w], i) => (
          <div key={i} className={clsx('flex h-[13px] items-center justify-center border-r border-[#707070]', w)}>
            {name}
          </div>
        ))}
        <svg viewBox="0 0 24 8" width="24" height="8" fill="#8a8a8a" className="mr-[5px] ml-auto">
          <path d="M4 0v8L0 4zM18 0v8l4-4z" />
        </svg>
      </div>
    </div>
  );
}

function StatusBar() {
  const cells = [
    ['Default', 'w-[149px]'],
    ['2015.09.03 23:53', 'w-[131px]'],
    ['O: 1.52555', 'w-[89px]'],
    ['H: 1.52555', 'w-[89px]'],
    ['L: 1.52547', 'w-[85px]'],
    ['C: 1.52548', 'w-[87px]'],
    ['V: 48', 'w-[85px]'],
  ];
  return (
    <div className={clsx('flex h-[22px] shrink-0 items-center bg-[#f0f0f0] pt-[2px] text-[11px] text-black', UI)}>
      <span className="w-[1044px] pl-[2px]">For Help, press F1</span>
      {cells.map(([t, w]) => (
        <div key={t} className={clsx('flex h-[18px] items-center border-l border-[#a0a0a0] pl-[5px] tracking-[-0.2px] whitespace-nowrap', w)}>
          {t}
        </div>
      ))}
      <div className="flex h-[18px] flex-1 items-center border-l border-[#a0a0a0] pl-[5px]">
        <svg viewBox="0 0 24 13" width="24" height="13">
          {Array.from({ length: 8 }, (_, i) => (
            <g key={i}>
              <rect x={i * 3} y="0" width="2" height={10 - i * 1.1} fill="#5f7d0a" />
              <rect x={i * 3} y={11 - i * 1.1} width="2" height={2 + i * 1.1} fill="#0c4468" />
            </g>
          ))}
        </svg>
        <span className="ml-[46px]">86/0 kb</span>
      </div>
    </div>
  );
}

/* ---------- taskbar ---------- */

const Big = ({ children }) => (
  <svg viewBox="0 0 30 30" width="30" height="30" fill="none" className="overflow-visible">
    {children}
  </svg>
);
const AdobeText = ({ children, fill }) => (
  <text x="14" y="20" textAnchor="middle" fill={fill} className="font-['Open_Sans',sans-serif] text-[14px] font-bold">{children}</text>
);
const Monkey = ({ ring, us }) => (
  <Big>
    <circle cx="15" cy="15" r="14" fill={ring} stroke="#9db7cc" />
    <path d="M6 14c0-9 16-11 19-2 2 7-3 14-10 15-6 0-9-6-9-13z" fill="#8f2e12" />
    <ellipse cx="12.500" cy="17" rx="7" ry="7.500" fill="#f7cfa0" />
    <path d="M5 11c6-5 12-5 19-1l1-3c-7-4-14-4-20 1z" fill="#f2c22e" />
    <circle cx="23" cy="16" r="3" fill="#f1b98b" />
    <circle cx="10" cy="15" r="1.200" fill="#3a1a0c" />
    <circle cx="15" cy="15" r="1.200" fill="#3a1a0c" />
    <path d="M9 20c2 2 4 2 6 0" stroke="#7a2a12" />
    {us && <text x="14" y="28.500" fill="#f6c51d" className="font-['Liberation_Sans',sans-serif] text-[11px] font-bold">US</text>}
  </Big>
);

const TASKS = [
  {
    id: 'start',
    icon: <Big><path d="M5 7.700l8-1.200v8.200H5zM14 6.300L25 5v9.700H14zM5 15.700h8V24l-8-1.200zM14 15.700h11V25l-11-1.300z" fill="#fff" /></Big>,
  },
  {
    id: 'search',
    icon: <Big><circle cx="16" cy="11.500" r="6.500" stroke="#fff" strokeWidth="1.500" /><path d="M11.500 16.500L3.500 25" stroke="#fff" strokeWidth="1.500" /></Big>,
  },
  {
    id: 'firefox',
    icon: (
      <Big>
        <circle cx="14.500" cy="14" r="12" fill="#1f5fae" />
        <path d="M8 5c4-4 13-4 17 3-4-2-8-1-10 2z" fill="#63c1ee" />
        <path d="M1.500 10c.500-3 2-5 3.500-6 .500 2 2.500 3 5 2.500-1 2 0 3.500 3.500 3.500-.500 3-4 3-4 6 1 4.500 7.500 5.500 10 2 3-2 3-5.500 2.500-8 2.500 2 4 0 4-2.500C30 17 27 28 15.500 29 5 29-.500 20 1.500 10z" fill="#e8701a" />
        <path d="M26 7c3 7 1 17-8 21.500-3 .500-6 .500-8-.500 8-1 13-6 14-13 1-3 2-5 2-8z" fill="#fbb52b" />
      </Big>
    ),
  },
  {
    id: 'chrome',
    running: true,
    icon: (
      <Big>
        <circle cx="14.500" cy="15" r="13.500" fill="#ffcd2e" />
        <path d="M14.500 15L2.800 8.300A13.500 13.500 0 0 1 26.200 8.300H14.500z" fill="#e2382b" />
        <path d="M2.800 8.300A13.500 13.500 0 0 0 13.500 28.500L20 18 9 17z" fill="#3aa757" />
        <circle cx="14.500" cy="15" r="6.500" fill="#fff" />
        <circle cx="14.500" cy="15" r="5" fill="#4a8af4" />
      </Big>
    ),
  },
  {
    id: 'ie',
    icon: (
      <Big>
        <path d="M25 20.500C22 30 5 29 4.500 16 5 3 25 3 25 17H10.500" stroke="#3bb7ee" strokeWidth="4.800" />
        <path d="M2 28C-4 22 17-3 27 3c2 1 1 4 0 6 0-3-2-4-5-3C13 9 4 20 5 25c0 1-1 3-3 3z" fill="#f6c32a" />
      </Big>
    ),
  },
  {
    id: 'green',
    icon: (
      <Big>
        <path d="M1 4l13-1 14-1.500V29l-14-1-13-2z" fill="#4fb415" />
        <path d="M1 4l13-1c0 9-4 15-13 18z" fill="#9be04c" />
        <g fill="#fff"><circle cx="9" cy="4" r="2" /><circle cx="14.500" cy="8.500" r="2.600" /><circle cx="21" cy="14" r="3" /><circle cx="15" cy="20" r="2.500" /><circle cx="9" cy="24" r="2" /><circle cx="8" cy="13" r="1.700" /></g>
      </Big>
    ),
  },
  {
    id: 'phoenix',
    icon: (
      <Big>
        <rect width="30" height="30" rx="3" fill="#b90d12" />
        <path d="M2 5c5 1 8 4 10 8l1-1-1-4 3-2 3 2-1 4 1 1c2-4 5-7 10-8-1 6-4 10-9 12l2 9-3-4-1 4-2-4-2 4-1-4-3 4 2-9C6 15 3 11 2 5z" fill="#f0eaea" />
      </Big>
    ),
  },
  {
    id: 'octafx',
    running: true,
    active: true,
    icon: (
      <Big>
        <rect width="30" height="30" fill="#47a0f0" />
        <text x="1.500" y="17.500" fill="#fff" textLength="16" lengthAdjust="spacingAndGlyphs" className="font-['Open_Sans',sans-serif] text-[7px]">OCTA</text>
        <text x="18" y="17.500" fill="#7cbdf7" textLength="10" lengthAdjust="spacingAndGlyphs" className="font-['Open_Sans',sans-serif] text-[7px]">FX</text>
      </Big>
    ),
  },
  {
    id: 'qlock',
    icon: (
      <Big>
        <rect width="30" height="30" fill="#7a0606" />
        <rect width="30" height="9" fill="#e01212" />
        <text x="2" y="8" textLength="26" lengthAdjust="spacingAndGlyphs" fill="#3a0000" className="font-['Liberation_Mono',monospace] text-[9px] font-bold">QLOCK</text>
        <rect y="14" width="30" height="12" fill="#f2f2f2" />
        <text x="1.500" y="24.500" textLength="27" lengthAdjust="spacingAndGlyphs" fill="#222" className="font-['Liberation_Sans',sans-serif] text-[12px]">18:30</text>
      </Big>
    ),
  },
  {
    id: 'earth',
    icon: (
      <Big>
        <circle cx="15" cy="15" r="13.500" fill="#2d5fc9" />
        <path d="M5 6c10-1 17 5 22 13l1-3C23 8 14 3 8 3.500zM2 13c9-1 14 5 20 12l3-3C19 13 10 8 3 9z" fill="#fff" />
        <path d="M2 18c6 1 10 6 14 10-7 1-13-4-14-10z" fill="#6fa0ee" />
      </Big>
    ),
  },
  {
    id: 'b',
    icon: (
      <Big>
        <rect width="30" height="30" rx="3" fill="#c8171c" />
        <path d="M0 3a3 3 0 0 1 3-3h24a3 3 0 0 1 3 3v10C18 13 8 16 0 20z" fill="#e66a6c" fillOpacity="0.700" />
        <path d="M8 5.500h7c6 0 5.500 8 1 8.500 6 0 6 10.500-1 10.500h-4.500V13" stroke="#141010" strokeWidth="3.800" />
      </Big>
    ),
  },
  {
    id: 'spade',
    icon: (
      <Big>
        <path d="M15 1c2 6 12 10 12 17 0 6-8 7-11 3 0 3 1 6 3 8h-8c2-2 3-5 3-8-3 4-11 3-11-3C3 11 13 7 15 1z" fill="#e3161a" />
        <path d="M15 10l1.300 3.400 3.700.100-3 2.200 1.200 3.500-3.200-2.100-3.200 2.100 1.200-3.500-3-2.200 3.700-.100z" fill="#fff" />
      </Big>
    ),
  },
  {
    id: 'cb',
    icon: (
      <Big>
        <path d="M15 1v5M15 24v5" stroke="#aaa" strokeWidth="2" />
        <path d="M22 9a9 9 0 1 0 0 12M19.500 11.500a5.500 5.500 0 1 0 0 7" stroke="#b5b5b5" strokeWidth="1.900" />
        <text x="12" y="18.500" fill="#ccc" className="font-['Liberation_Sans',sans-serif] text-[8px] font-bold">B</text>
        <path d="M20 15h4" stroke="#aaa" />
      </Big>
    ),
  },
  {
    id: 'paint',
    icon: (
      <Big>
        <rect x="1" y="1" width="23" height="28" fill="#f4f7fb" stroke="#a8b4c2" />
        <rect x="3" y="3" width="19" height="17" fill="#2b5aa8" />
        <path d="M3 13c2-4 4-2 6-5 3 1 4-3 8-1 2 0 3-1 5-1v10c-6 2-12 2-19 4z" fill="#c6daf0" />
        <path d="M3 27l5-6 5 3-4 3z" fill="#1c2c6e" />
        <path d="M29 9L12 24" stroke="#c8242a" strokeWidth="2.400" />
      </Big>
    ),
  },
  { id: 'ps', icon: <Big><path d="M1 2l1.500-1.500H28.500V26L27 28H1z" fill="#083f78" /><rect x="1" y="2" width="26" height="26" fill="#0a72c4" /><AdobeText fill="#5fd0ff">Ps</AdobeText></Big> },
  { id: 'ai', icon: <Big><path d="M1 2l1.500-1.500H28.500V26L27 28H1z" fill="#a85400" /><rect x="1" y="2" width="26" height="26" fill="#e07f04" /><AdobeText fill="#ffd479">Ai</AdobeText></Big> },
  {
    id: 'pdf',
    icon: (
      <Big>
        <rect x="1.500" y="1" width="27" height="27" fill="#eeeeee" stroke="#c9c9c9" />
        <rect x="1.500" y="0.500" width="25" height="2" fill="#c91616" />
        <path d="M6 23c6-5 9-10 8-16M14 7c0 7 4 11 11 12M8 21c5-4 11-4 17-2" stroke="#c61a1a" strokeWidth="1.700" />
      </Big>
    ),
  },
  { id: 'monkey-us', icon: <Monkey ring="#4fa8dc" us /> },
  { id: 'monkey', icon: <Monkey ring="#e3e9f2" /> },
  {
    id: 'burn',
    icon: (
      <Big>
        <circle cx="15" cy="15" r="14" fill="#8d8d8d" />
        <path d="M15 15L3 7A14 14 0 0 1 12 1z" fill="#c4c4c4" />
        <path d="M15 15l14-4a14 14 0 0 0-5-7z" fill="#b2b2b2" />
        <path d="M2 16c2 3 3-3 5 2 2-4 4 1 5-1 3 3 5-2 7 1 2-5 5 0 9-3 0 8-6 14-13 14S2 24 2 16z" fill="#e0821c" />
        <path d="M7 27c0-4 3-2 4-6 2 3 3 1 5 0 0 3 4 2 5 6z" fill="#ffd257" />
        <circle cx="15" cy="14" r="3.500" fill="#eee" stroke="#777" />
        <circle cx="15" cy="14" r="1.500" fill="#444" />
      </Big>
    ),
  },
  {
    id: 'store',
    icon: (
      <Big>
        <path d="M2 8l26 1.500v17L21 29 2 26z" fill="#fff" />
        <path d="M9 9c0-11 9-11 10-1M12 9c0-11 8-12 9-2" stroke="#fff" strokeWidth="1.500" />
        <path d="M6 13.500l5-.500v4.500H6zM12 12.800l7-.600v5.300h-7zM6 18.500h5V23l-5-.600zM12 18.500h7v5.300l-7-.700z" fill="#111" />
      </Big>
    ),
  },
  {
    id: 'folder',
    icon: (
      <Big>
        <path d="M2 3h9l2 2.500h16V26H2z" fill="#f9c94a" />
        <path d="M2 7h27v19H2z" fill="#ffe08c" />
        <path d="M7 27V15h17v12h-4.500v-6.500h-8V27z" fill="#2fb0ea" />
      </Big>
    ),
  },
];

function Taskbar() {
  return (
    <div className="flex h-[50px] shrink-0 bg-linear-to-r from-[#120f0d] via-[#1b1a1a] via-60% to-[#0d0c0b] text-white">
      <div className="-ml-px flex">
        {TASKS.map((t) => (
          <div
            key={t.id}
            className={clsx(
              'flex w-[61.9px] flex-col items-center justify-between pt-[10px]',
              t.active && 'bg-[#3f3f40]',
            )}
          >
            {t.icon}
            {t.running && <div className={clsx('h-[3px] bg-[#fbd38a]', t.active ? 'w-full' : 'w-[51px]')} />}
          </div>
        ))}
      </div>
      <div className="ml-auto flex items-center border-r border-[#5a5a5a] pr-[12px]">
        <svg viewBox="0 0 80 22" width="80" height="22" fill="none" stroke="#fff" strokeWidth="1.300">
          <path d="M1 15l7.500-8 7.500 8" />
          <path d="M28.500 8h3l5-5v16l-5-5h-3z" />
          <path d="M39 8.500c1.500 1.500 1.500 3.500 0 5" />
          <path d="M42 6c3 3 3 7 0 10M45 4c4 4 4 10 0 14" stroke="#777" />
          <path d="M62 4.500h16.500v11H62M66 19h9M70.500 16v3M58.500 4.500h4v4h-4zM60.500 8.500V19" />
        </svg>
        <div className={clsx('ml-[16px] w-[63px] pb-[2px] text-center text-[14.500px] leading-[21px] tracking-[-0.3px]', UI)}>
          <div>5:45 AM</div>
          <div>9/4/2015</div>
        </div>
      </div>
      <div className="w-[5px]" />
    </div>
  );
}

export default function App() {
  return (
    <div className="flex h-[1080px] w-[1920px] flex-col overflow-hidden bg-[#f0f0f0]">
      <TitleBar />
      <MenuBar />
      <Toolbar />
      <div className="h-[2px] shrink-0 border-t border-[#a0a0a0] bg-[#696969]" />
      <div className="relative flex h-[905px] shrink-0 bg-[#ababab]">
        <Chart />
        <div className={clsx('absolute top-[261px] left-[1083px] h-[45px] w-[84px] border border-[#767676] bg-white pt-[2px] pl-[5px] text-[14px] leading-[20px] tracking-[-0.1px] text-[#575757]', UI)}>
          <div>Text 30213</div>
          <div>1.52802</div>
        </div>
      </div>
      <ChartTabs />
      <StatusBar />
      <Taskbar />
    </div>
  );
}
